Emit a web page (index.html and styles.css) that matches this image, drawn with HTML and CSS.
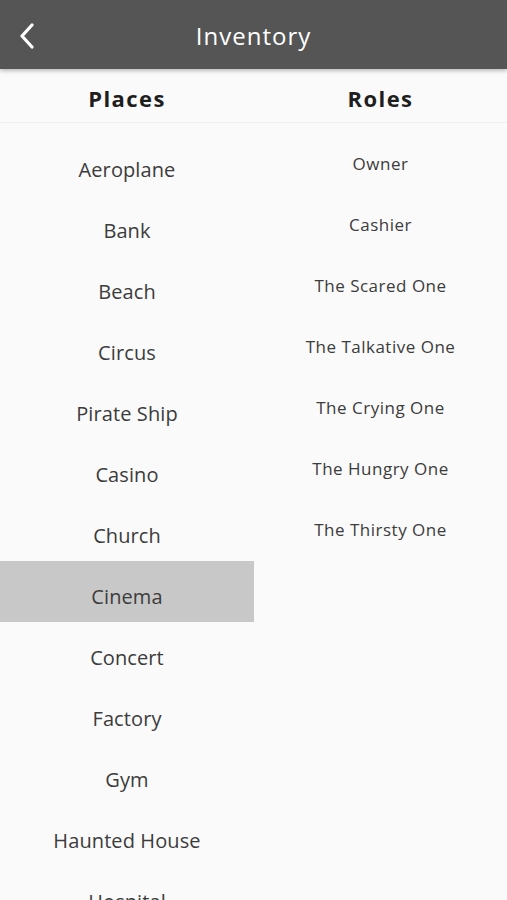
FILE: index.html
```html
<!DOCTYPE html>
<html lang="en">
<head>
<meta charset="utf-8">
<title>Inventory</title>
<link rel="stylesheet" href="styles.css">
</head>
<body>
<div class="app">
  <header class="topbar">
    <button class="back" aria-label="Back">
      <svg width="18" height="26" viewBox="0 0 18 26"><path d="M14 2 L4 13 L14 24" fill="none" stroke="#fff" stroke-width="3.2" stroke-linecap="round" stroke-linejoin="round"/></svg>
    </button>
    <h1 class="title">Inventory</h1>
  </header>
  <div class="colheads">
    <div class="colhead">Places</div>
    <div class="colhead">Roles</div>
  </div>
  <main class="columns">
    <ul class="list places">
      <li>Aeroplane</li>
      <li>Bank</li>
      <li>Beach</li>
      <li>Circus</li>
      <li>Pirate Ship</li>
      <li>Casino</li>
      <li>Church</li>
      <li class="selected">Cinema</li>
      <li>Concert</li>
      <li>Factory</li>
      <li>Gym</li>
      <li>Haunted House</li>
      <li>Hospital</li>
    </ul>
    <ul class="list roles">
      <li>Owner</li>
      <li>Cashier</li>
      <li>The Scared One</li>
      <li>The Talkative One</li>
      <li>The Crying One</li>
      <li>The Hungry One</li>
      <li>The Thirsty One</li>
    </ul>
  </main>
</div>
</body>
</html>
```

FILE: styles.css
```css
* { box-sizing: border-box; }
html, body { margin: 0; padding: 0; }
body {
  background: #fafafa;
  font-family: "Open Sans", "Noto Sans", sans-serif;
  width: 507px;
  height: 900px;
  overflow: hidden;
}
.app { display: flex; flex-direction: column; }
.topbar {
  position: relative;
  z-index: 2;
  height: 69px;
  background: #555555;
  display: flex;
  align-items: center;
  justify-content: center;
  box-shadow: 0 2px 4px rgba(0,0,0,0.25);
}
.back {
  position: absolute;
  left: 16px;
  top: 22px;
  background: none;
  border: 0;
  padding: 0;
  width: 22px;
  height: 28px;
  display: flex;
  align-items: center;
  justify-content: center;
}
.title {
  margin: 0;
  color: #ffffff;
  font-size: 24px;
  font-weight: 400;
  letter-spacing: 1px;
  line-height: 1;
  padding-top: 2px;
}
.colheads {
  display: grid;
  grid-template-columns: 254px 1fr;
  height: 54px;
  border-bottom: 1px solid #efefef;
}
.colhead {
  display: flex;
  align-items: center;
  justify-content: center;
  font-size: 22px;
  font-weight: 700;
  letter-spacing: 1.4px;
  color: #1e1e1e;
  padding-top: 4px;
}
.columns {
  display: grid;
  grid-template-columns: 254px 1fr;
  padding-top: 11px;
}
.list { list-style: none; margin: 0; padding: 0; }
.list li {
  height: 61px;
  display: flex;
  align-items: center;
  justify-content: center;
  color: #3c3c3c;
}
.places li {
  font-size: 20px;
  letter-spacing: 0.1px;
  padding-top: 9px;
}
.places li.selected { background: #c8c8c8; }
.roles li {
  font-size: 17px;
  letter-spacing: 0.5px;
  padding-top: 0;
  margin-top: -1px;
  margin-bottom: 1px;
}
```
